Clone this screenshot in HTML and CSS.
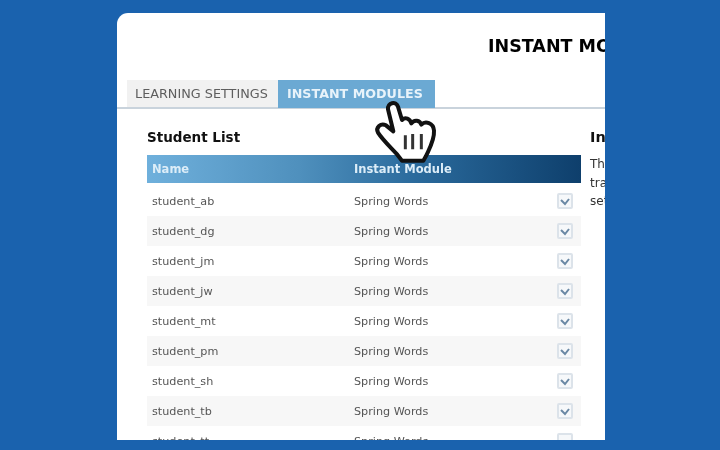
FILE: index.html
```html
<!DOCTYPE html>
<html lang="en">
<head>
<meta charset="utf-8">
<title>Instant Modules</title>
<link rel="stylesheet" href="styles.css">
</head>
<body>
<div class="stage">
  <div class="card">
    <h1 class="title">INSTANT MODULES</h1>
    <div class="tabs">
      <div class="tab">LEARNING SETTINGS</div>
      <div class="tab tab-active">INSTANT MODULES</div>
    </div>
    <div class="content">
      <section class="students">
        <h2 class="heading">Student List</h2>
        <div class="row row-head"><span>Name</span><span>Instant Module</span></div>
        <div class="row"><span>student_ab</span><span>Spring Words</span><span class="check"><svg viewBox="0 0 12 12"><path d="M2 5l4 4 4-5"/></svg></span></div>
        <div class="row"><span>student_dg</span><span>Spring Words</span><span class="check"><svg viewBox="0 0 12 12"><path d="M2 5l4 4 4-5"/></svg></span></div>
        <div class="row"><span>student_jm</span><span>Spring Words</span><span class="check"><svg viewBox="0 0 12 12"><path d="M2 5l4 4 4-5"/></svg></span></div>
        <div class="row"><span>student_jw</span><span>Spring Words</span><span class="check"><svg viewBox="0 0 12 12"><path d="M2 5l4 4 4-5"/></svg></span></div>
        <div class="row"><span>student_mt</span><span>Spring Words</span><span class="check"><svg viewBox="0 0 12 12"><path d="M2 5l4 4 4-5"/></svg></span></div>
        <div class="row"><span>student_pm</span><span>Spring Words</span><span class="check"><svg viewBox="0 0 12 12"><path d="M2 5l4 4 4-5"/></svg></span></div>
        <div class="row"><span>student_sh</span><span>Spring Words</span><span class="check"><svg viewBox="0 0 12 12"><path d="M2 5l4 4 4-5"/></svg></span></div>
        <div class="row"><span>student_tb</span><span>Spring Words</span><span class="check"><svg viewBox="0 0 12 12"><path d="M2 5l4 4 4-5"/></svg></span></div>
        <div class="row"><span>student_tt</span><span>Spring Words</span><span class="check"></span></div>
      </section>
      <aside class="info">
        <h2 class="heading heading-info">Instant Modules</h2>
        <p class="info-text">The<br>track<br>set</p>
      </aside>
    </div>
    <svg class="hand" viewBox="0 0 270 240" aria-hidden="true">
      <path class="hand-fill" d="M84 58C82 38 108 32 114 50L126 90C136 80 150 86 154 100C162 88 180 90 184 104C196 92 220 98 222 122C224 150 208 176 198 198L190 212H126L112 194C92 172 68 150 54 128C46 112 62 98 78 106L100 124Z"/>
      <path class="hand-lines" d="M136 136V178M158 132V178M184 132V178"/>
    </svg>
  </div>
</div>
</body>
</html>
```

FILE: styles.css
```css
* { box-sizing: border-box; }
html, body { margin: 0; height: 100%; }
body {
  background: #1a62ae;
  overflow: hidden;
  font-family: "DejaVu Sans", Verdana, sans-serif;
}
.stage {
  width: 720px;
  height: 450px;
  padding: 13px 115px 10px 117px;
}
.card {
  position: relative;
  height: 100%;
  background: #fff;
  border-top-left-radius: 11px;
  overflow: hidden;
  filter: blur(0.7px);
}
.title {
  margin: 0;
  padding: 22px 0 0 371px;
  height: 67px;
  font-size: 17.5px;
  line-height: 22px;
  font-weight: bold;
  color: #000;
  white-space: nowrap;
}
.tabs {
  display: flex;
  height: 29px;
  padding-left: 10px;
  border-bottom: 2px solid #c9d3dc;
}
.tab {
  width: 151px;
  height: 27px;
  padding-left: 8px;
  font-size: 12.8px;
  line-height: 27px;
  color: #5e5e5e;
  background: #f1f1f1;
  white-space: nowrap;
}
.tab-active {
  width: 157px;
  height: 28px;
  padding-left: 9px;
  font-weight: bold;
  font-size: 12.7px;
  line-height: 28px;
  color: #e8f3fa;
  background: #6ba9d3;
}
.content {
  display: flex;
  gap: 9px;
  padding: 18px 0 0 30px;
}
.students { flex: 0 0 434px; }
.info { flex: 0 0 200px; }
.heading {
  margin: 0 0 7px;
  font-size: 13.5px;
  line-height: 21px;
  font-weight: bold;
  color: #111;
  white-space: nowrap;
}
.heading-info { font-size: 14.5px; }
.row {
  display: grid;
  grid-template-columns: 202px 203px 16px;
  align-items: center;
  height: 30px;
  padding-left: 5px;
  font-size: 11.2px;
  color: #555;
}
.row:nth-child(even) { background: #f7f7f7; }
.row.row-head {
  height: 28px;
  margin-bottom: 3px;
  font-size: 11.5px;
  font-weight: bold;
  color: #dcedf8;
  background: linear-gradient(90deg, #6fb0dc 0%, #4f90bd 35%, #2a6a9c 62%, #0e3f6c 100%);
}
.check {
  display: block;
  width: 16px;
  height: 16px;
  border: 2px solid #dce3ea;
  border-radius: 2px;
  background: #f6f8fa;
}
.check svg { display: block; width: 12px; height: 12px; }
.check path {
  fill: none;
  stroke: #6a88a4;
  stroke-width: 2;
}
.info-text {
  margin: 0;
  font-size: 12px;
  line-height: 18.5px;
  color: #333;
}
.hand {
  position: absolute;
  left: 243px;
  top: 77px;
  width: 90px;
  height: 80px;
}
.hand-fill {
  fill: #fff;
  stroke: #111;
  stroke-width: 12;
  stroke-linejoin: round;
}
.hand-lines {
  fill: none;
  stroke: #333;
  stroke-width: 9;
}
```
